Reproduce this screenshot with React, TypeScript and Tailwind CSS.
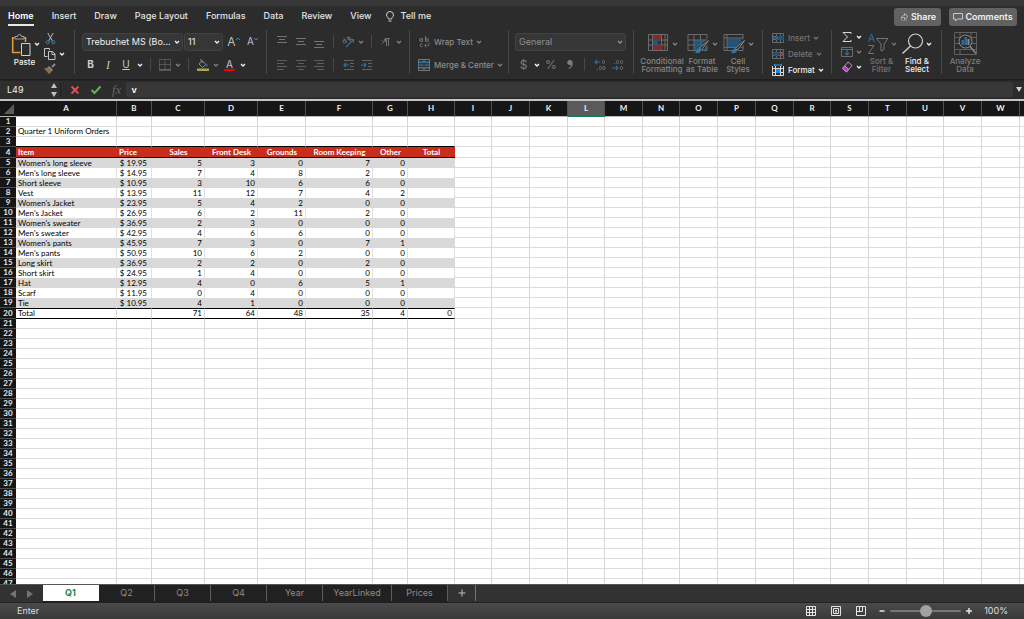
import React, { useState } from "react";

type Row = [string, string, number, number, number, number, number];

const rows: Row[] = [
  ["Women's long sleeve", "19.95", 5, 3, 0, 7, 0],
  ["Men's long sleeve", "14.95", 7, 4, 8, 2, 0],
  ["Short sleeve", "10.95", 3, 10, 6, 6, 0],
  ["Vest", "13.95", 11, 12, 7, 4, 2],
  ["Women's Jacket", "23.95", 5, 4, 2, 0, 0],
  ["Men's Jacket", "26.95", 6, 2, 11, 2, 0],
  ["Women's sweater", "36.95", 2, 3, 0, 0, 0],
  ["Men's sweater", "42.95", 4, 6, 6, 0, 0],
  ["Women's pants", "45.95", 7, 3, 0, 7, 1],
  ["Men's pants", "50.95", 10, 6, 2, 0, 0],
  ["Long skirt", "36.95", 2, 2, 0, 2, 0],
  ["Short skirt", "24.95", 1, 4, 0, 0, 0],
  ["Hat", "12.95", 4, 0, 6, 5, 1],
  ["Scarf", "11.95", 0, 4, 0, 0, 0],
  ["Tie", "10.95", 4, 1, 0, 0, 0],
];

const headings = ["Item", "Price", "Sales", "Front Desk", "Grounds", "Room Keeping", "Other", "Total"];
const totals = ["Total", "", "71", "64", "48", "35", "4", "0"];
const letters = "ABCDEFGHIJKLMNOPQRSTUVW".split("");
const columnWidths = [101, 35, 53, 53, 48, 67, 35, 47, 37, 38, 38, 37, 38, 37, 38, 38, 38, 37, 38, 38, 37, 38, 38];

function Chev({ className = "text-[#808080]" }: { className?: string }) {
  return (
    <svg viewBox="0 0 10 10" className={`h-[10px] w-[10px] shrink-0 ${className}`} fill="none" stroke="currentColor" strokeWidth="1.3" aria-hidden="true">
      <path d="M3 4l2 2 2-2" />
    </svg>
  );
}

function Sep() {
  return <span className="mx-[5px] h-[13px] w-px shrink-0 bg-[#484848]" />;
}

function Tool({ label, className = "w-[17px]", children }: { label: string; className?: string; children: React.ReactNode }) {
  return (
    <button type="button" aria-label={label} className={`flex h-[17px] shrink-0 items-center justify-center ${className}`}>
      {children}
    </button>
  );
}

function Group({ className, children }: { className: string; children: React.ReactNode }) {
  return <div className={`h-[44px] shrink-0 border-r border-[#484848] ${className}`}>{children}</div>;
}

function Picker({ label, value, options, className, tone }: { label: string; value: string; options: string[]; className: string; tone: string }) {
  return (
    <label className={`relative flex h-[18px] items-center rounded-[3px] border border-[#424242] bg-[#363636] ${className}`}>
      <select aria-label={label} defaultValue={value} className={`h-full w-full appearance-none bg-transparent pl-[3px] pr-3 text-[9px] leading-[14px] outline-none ${tone}`}>
        {options.map((o) => (
          <option key={o}>{o}</option>
        ))}
      </select>
      <span className="pointer-events-none absolute right-0">
        <Chev className={tone} />
      </span>
    </label>
  );
}

function Lines({ rows: ls, tone = "#747474" }: { rows: [number, number, number][]; tone?: string }) {
  return (
    <svg viewBox="0 0 12 12" className="h-3 w-3" stroke={tone} strokeWidth="1">
      {ls.map(([a, b, y]) => (
        <path key={y} d={`M${a} ${y}.5H${b}`} />
      ))}
    </svg>
  );
}

function Indent({ right = false }: { right?: boolean }) {
  return (
    <svg viewBox="0 0 12 12" className="h-3 w-3" fill="none" stroke="#626262">
      <path d="M1 1.5h10M7 4.5h4M7 7.5h4M1 10.5h10" />
      <path stroke="#2f6f9c" strokeWidth="1.2" d={right ? "M0 6h5M3 4l2 2-2 2" : "M6 6H1M3 4L1 6l2 2"} />
    </svg>
  );
}

function Decimal({ increase }: { increase: boolean }) {
  return (
    <svg viewBox="0 0 12 12" className="h-3 w-3" fill="none" stroke="#6e6e6e">
      {increase ? (
        <>
          <rect x="8.5" y="1.5" width="2" height="3" rx="1" />
          <path d="M3 10.5h1" />
          <rect x="5.5" y="7.5" width="2" height="3" rx="1" />
          <rect x="9" y="7.5" width="2" height="3" rx="1" />
          <path stroke="#2f6f9c" strokeWidth="1.1" d="M6 3H1M3 1L1 3l2 2" />
        </>
      ) : (
        <>
          <path d="M2 4.5h1" />
          <rect x="4.5" y="1.5" width="2" height="3" rx="1" />
          <rect x="8.5" y="1.5" width="2" height="3" rx="1" />
          <rect x="8.5" y="7.5" width="2" height="3" rx="1" />
          <path stroke="#2f6f9c" strokeWidth="1.1" d="M0 9h6M4 7l2 2-2 2" />
        </>
      )}
    </svg>
  );
}

function BigTool({ icon, lines, tone, chevron = true, className }: { icon: React.ReactNode; lines: string[]; tone: string; chevron?: boolean; className: string }) {
  return (
    <button type="button" className={`flex shrink-0 flex-col items-center ${className}`}>
      <span className={`flex h-[27px] items-center ${chevron ? "pl-[2px]" : ""}`}>
        {icon}
        {chevron && <Chev className={tone} />}
      </span>
      <span className={`block whitespace-nowrap text-center text-[8px] font-medium leading-[8px] ${tone}`}>
        {lines[0]}
        <br />
        {lines[1]}
      </span>
    </button>
  );
}

function CellsIcon({ kind }: { kind: "insert" | "delete" | "format" }) {
  const bright = kind === "format";
  return (
    <svg viewBox="0 0 12 12" className="h-3 w-3" fill="none" stroke={bright ? "#d8d8d8" : "#686868"}>
      <path d={bright ? "M.5 2v9.5h11V2M.5 4.5h11M.5 8.5h11M3.5 2v9.5M8.5 2v9.5" : "M.5 1.5h11v9H.5zM.5 4.5h11M.5 7.5h11M4.5 1.5v9M8.5 1.5v9"} />
      {kind === "insert" && <path d="M4 4h8v4H4z" fill="#245577" stroke="none" />}
      {kind === "insert" && <path d="M6 6H0M2 4L0 6l2 2" stroke="#2f7db5" />}
      {kind === "delete" && <path d="M2 4h5v4H2z" fill="#245577" stroke="none" />}
      {kind === "delete" && <path d="M8 4l4 4M12 4L8 8" stroke="#a03a3a" />}
      {bright && <path d="M4 5h4v4H4z" fill="#1d8ce0" stroke="none" />}
      {bright && <path d="M2.5 0v2M9.5 0v2M2.5 1h7" stroke="#2d9bea" />}
    </svg>
  );
}

function GridIcon({ kind }: { kind: "conditional" | "table" | "cell" }) {
  return (
    <svg viewBox="0 0 23 20" className="h-5 w-[23px]" fill="none" stroke="#6c6c6c">
      {kind === "conditional" && (
        <>
          <path d="M1.500 .5h19v16h-19zM1.500 6h19M1.500 11h19M5.500 .5v16M14.500 .5v16M18 .5v16" />
          <path d="M6 1h8v5H6zM6 11h10v5H6z" fill="#82292e" stroke="none" />
          <path d="M6 6h5v5H6z" fill="#22567a" stroke="none" />
        </>
      )}
      {kind === "table" && (
        <>
          <path d="M7 6h13v10H7z" fill="#1f557c" stroke="none" />
          <path d="M1 .5h19v16H1zM1 6h19M1 11h6M7 .5v16M13.500 .5v5.500" stroke="#6a6a6a" />
          <path d="M7 11h13M13.500 6v10" stroke="#33617f" />
        </>
      )}
      {kind === "cell" && (
        <>
          <path d="M4 4.500h14v9H4z" fill="#1f557c" stroke="none" />
          <path d="M1 .5h19v16H1zM1 4h19M1 13.500h19M4 .5v16" stroke="#6a6a6a" />
        </>
      )}
      {kind !== "conditional" && (
        <>
          <path d="M22 6l-9 10" stroke="#2c2c2c" strokeWidth="4" />
          <path d="M21.500 6.500L13.500 13l-1 2 2 1z" stroke="#8c8c8c" fill="#2c2c2c" />
          <path d="M12 14.500c-2 0-2.500 1.500-3 3-.5 1-1.500 1-2 1 3 1.500 7 1 7-2.500z" fill="#2a78ad" stroke="none" />
        </>
      )}
    </svg>
  );
}

function Ribbon() {
  const dim = "text-[#858585]";
  const lit = "text-[#f0f0f0]";
  const low = "#5e5e5e";
  return (
    <div className="flex h-[50px] overflow-hidden border-b border-[#1e1e1e]">
      <Group className="flex w-[75px] pl-[11px]">
        <button type="button" className="flex w-[32px] flex-col items-start">
          <span className="flex h-[27px] items-center">
            <svg viewBox="0 0 21 23" className="mt-1 h-[23px] w-[21px]" fill="none">
              <path d="M3.500 3.700H1.700V18.500H9.500M14.500 8V3.700h-1.500" stroke="#e5983a" strokeWidth="1.600" />
              <path d="M4 5V2.500h2.500a2 2 0 0 1 4 0H13V5z" stroke="#a2a2a2" />
              <path d="M10.500 9.500h8.500v12h-8.500z" stroke="#d0d0d0" />
            </svg>
            <Chev className={lit} />
          </span>
          <span className="w-[27px] text-center text-[8px] font-medium leading-[10px] text-[#f0f0f0]">Paste</span>
        </button>
        <div className="flex flex-col">
          <Tool label="Cut" className="w-[14px]">
            <svg viewBox="0 0 12 14" className="h-[13px] w-[11px]" fill="none">
              <path d="M3 1l5 8.500M9 1L4 9.500" stroke="#c8c8c8" />
              <circle cx="3" cy="11" r="1.700" stroke="#2f8fce" />
              <circle cx="9" cy="11" r="1.700" stroke="#2f8fce" />
            </svg>
          </Tool>
          <span className="flex h-[13px] items-center">
            <Tool label="Copy" className="w-[14px]">
              <svg viewBox="0 0 12 12" className="h-3 w-3" fill="none" stroke="#c4c4c4">
                <path d="M3.500 8.500h-3v-8h5V2" />
                <path d="M4.500 3.500h4l2.500 2.500v5.500H4.500zM8 4v2.500h3" />
              </svg>
            </Tool>
            <Chev className={lit} />
          </span>
          <Tool label="Format painter" className="w-[14px]">
            <svg viewBox="0 0 12 12" className="h-3 w-3" fill="none">
              <path d="M11 1L8 4" stroke="#8b8b8b" strokeWidth="2" />
              <path d="M5 3l4 4-1.500 1.500-4-4z" fill="#8b8b8b" />
              <path d="M3.500 4.500L0 5.500l5 5.500c1.500-1 2-1.500 2.500-2.500z" fill="#857149" />
            </svg>
          </Tool>
        </div>
      </Group>

      <Group className="w-[192px] pl-[7px]">
        <div className="flex h-[23px] items-center gap-px">
          <Picker label="Font" value="Trebuchet MS (Bo..." options={["Trebuchet MS (Bo...", "Arial"]} className="w-[101px]" tone={lit} />
          <Picker label="Font size" value="11" options={["10", "11", "12"]} className="w-[39px]" tone={lit} />
          <Tool label="Increase font size" className="w-[19px]">
            <span className="text-[12px] text-[#bdbdbd]">A</span>
            <svg viewBox="0 0 4 10" className="h-[10px] w-1" fill="none" stroke="#2f8fce"><path d="M0 3l2-2 2 2" /></svg>
          </Tool>
          <Tool label="Decrease font size">
            <span className="text-[10px] text-[#bdbdbd]">A</span>
            <svg viewBox="0 0 4 10" className="h-[10px] w-1" fill="none" stroke="#2f8fce"><path d="M0 1l2 2 2-2" /></svg>
          </Tool>
        </div>
        <div className="flex h-[23px] items-center">
          <Tool label="Bold"><b className="text-[10px] text-[#d0d0d0]">B</b></Tool>
          <Tool label="Italic" className="w-[18px]"><i className="font-['Liberation_Serif',serif] text-[12px] text-[#c0c0c0]">I</i></Tool>
          <Tool label="Underline" className="w-[18px]"><u className="text-[10px] text-[#c8c8c8]">U</u></Tool>
          <Chev className={lit} />
          <Sep />
          <Tool label="Borders">
            <svg viewBox="0 0 12 12" className="h-3 w-3" fill="none" stroke="#787878">
              <path d="M.5.500h11v10H.5zM6 .5v10M.5 5.500h11" strokeDasharray="1 1" />
              <path d="M0 11h12" />
            </svg>
          </Tool>
          <Chev />
          <Sep />
          <Tool label="Fill color">
            <svg viewBox="0 0 12 12" className="h-3 w-3" fill="none">
              <path d="M5 1.500l4 4L5.500 8.500 2 5z" stroke="#8a8a8a" />
              <path d="M3.500 0l2 4" stroke="#8a8a8a" />
              <path d="M10 4.500c1 1.500 1 3 0 3s-1-1.500 0-3" fill="#2a6a94" />
              <path d="M0 9.500h12V12H0z" fill="#a9a452" />
            </svg>
          </Tool>
          <Chev />
          <Tool label="Font color">
            <span className="flex w-[11px] flex-col items-center border-b-2 border-[#f00000] text-[10px] leading-[10px] text-[#c8c8c8]">A</span>
          </Tool>
          <Chev className={lit} />
        </div>
      </Group>

      <Group className="w-[143px] pl-[5px]">
        <div className="flex h-[23px] items-center">
          <Tool label="Align top" className="w-[19px]"><Lines rows={[[1, 11, 0], [3, 9, 3], [1, 11, 6]]} /></Tool>
          <Tool label="Align middle" className="w-[19px]"><Lines rows={[[1, 11, 2], [3, 9, 5], [1, 11, 8]]} /></Tool>
          <Tool label="Align bottom" className="w-[18px]"><Lines rows={[[1, 11, 5], [3, 9, 8], [1, 11, 11]]} /></Tool>
          <Sep />
          <Tool label="Orientation">
            <svg viewBox="0 0 12 12" className="h-3 w-3" fill="none">
              <circle cx="2.500" cy="5.500" r="1.500" stroke="#707070" />
              <path d="M1.500 2l3.500 4.500M5 1l3.500 4" stroke="#707070" />
              <circle cx="7" cy="2.500" r="1.300" stroke="#707070" />
              <path d="M4 11l7-7M8 3.500h3.500V7" stroke="#2f6f9c" strokeWidth="1.200" />
            </svg>
          </Tool>
          <Chev />
          <Sep />
          <Tool label="Text direction">
            <svg viewBox="0 0 12 12" className="h-3 w-3" fill="none">
              <path d="M1.500 4L4 6 1.500 8" stroke="#2f6f9c" />
              <path d="M6.500 10V2.500M8.500 10V2.500M10 2.500H7" stroke="#707070" />
              <path d="M7 2H6a2 2 0 0 0 0 4h1z" fill="#707070" />
            </svg>
          </Tool>
          <Chev />
        </div>
        <div className="flex h-[23px] items-center">
          <Tool label="Align left" className="w-[19px]"><Lines tone={low} rows={[[1, 11, 1], [1, 8, 4], [1, 11, 7], [1, 8, 10]]} /></Tool>
          <Tool label="Center" className="w-[19px]"><Lines tone={low} rows={[[1, 11, 1], [3, 9, 4], [1, 11, 7], [3, 9, 10]]} /></Tool>
          <Tool label="Align right" className="w-[18px]"><Lines tone={low} rows={[[1, 11, 1], [4, 11, 4], [1, 11, 7], [4, 11, 10]]} /></Tool>
          <Sep />
          <Tool label="Decrease indent" className="w-[19px]"><Indent /></Tool>
          <Tool label="Increase indent" className="w-[18px]"><Indent right /></Tool>
        </div>
      </Group>

      <Group className="w-[99px] pl-2">
        <button type="button" className="flex h-[23px] items-center whitespace-nowrap">
          <svg viewBox="0 0 12 12" className="mr-1 h-3 w-3" fill="none" stroke="#767676">
            <circle cx="3" cy="4" r="1.500" />
            <path d="M4.500 2.500v3M7.500 0v5.500" />
            <circle cx="9" cy="4" r="1.500" />
            <path d="M4.500 8a1.500 1.500 0 1 0 0 2.500" />
            <path d="M11 6.500v3H6.500M8.500 7.500l-2 2 2 2" stroke="#2f6f9c" />
          </svg>
          <span className="mr-px text-[8px] font-medium text-[#8c8c8c]">Wrap Text</span>
          <Chev />
        </button>
        <button type="button" className="flex h-[23px] items-center whitespace-nowrap">
          <svg viewBox="0 0 12 12" className="mr-1 h-3 w-3" fill="none">
            <path d="M.5.500h11v11H.5zM.5 3h11M.5 9h11M6 .5V3M6 9v2.500" stroke="#787878" />
            <path d="M1 3.500h10v5H1z" stroke="#2f6f9c" />
            <path d="M2.500 6h7M4 4.500L2.500 6 4 7.500M8 4.500L9.500 6 8 7.500" stroke="#2f6f9c" />
          </svg>
          <span className="mr-px text-[8px] font-medium text-[#8c8c8c]">Merge &amp; Center</span>
          <Chev />
        </button>
      </Group>

      <Group className="w-[125px] pl-[6px]">
        <div className="flex h-[23px] items-center">
          <Picker label="Number format" value="General" options={["General", "Currency", "Percent"]} className="w-[111px]" tone="text-[#8f8f8f]" />
        </div>
        <div className="flex h-[23px] items-center text-[12px] text-[#7a7a7a]">
          <Tool label="Currency">$</Tool>
          <Chev className="text-white" />
          <Tool label="Percent" className="w-[18px]">%</Tool>
          <Tool label="Comma style" className="w-[19px]">
            <svg viewBox="0 0 6 9" className="h-[9px] w-[6px]" fill="#7e7e7e">
              <path d="M3 0a2.500 2.500 0 0 0-.5 5q1 .2 1.500-.2C4 6.500 3 7.500 1.500 8l.5 1C4.500 8 5.700 6 5.700 3.200 5.700 1.200 4.500 0 3 0z" />
            </svg>
          </Tool>
          <Sep />
          <Tool label="Increase decimal" className="w-[19px]"><Decimal increase /></Tool>
          <Tool label="Decrease decimal" className="w-[18px]"><Decimal increase={false} /></Tool>
        </div>
      </Group>

      <Group className="flex w-[129px] pl-[6px]">
        <BigTool className="w-[44px]" icon={<GridIcon kind="conditional" />} lines={["Conditional", "Formatting"]} tone={dim} />
        <BigTool className="w-[36px]" icon={<GridIcon kind="table" />} lines={["Format", "as Table"]} tone={dim} />
        <BigTool className="w-[36px]" icon={<GridIcon kind="cell" />} lines={["Cell", "Styles"]} tone={dim} />
      </Group>

      <Group className="flex w-[69px] flex-col pl-[9px]">
        {(["Insert", "Delete", "Format"] as const).map((name) => {
          const tone = name === "Format" ? lit : "text-[#747474]";
          return (
            <button key={name} type="button" className={`flex h-[16px] shrink-0 items-center text-[8px] font-medium ${tone}`}>
              <CellsIcon kind={name.toLowerCase() as "insert" | "delete" | "format"} />
              <span className="ml-1 mr-px">{name}</span>
              <Chev className={tone} />
            </button>
          );
        })}
      </Group>

      <Group className="flex w-[110px] pl-[8px]">
        <div className="flex w-[24px] flex-col">
          <button type="button" aria-label="AutoSum" className="flex h-[16px] items-center">
            <svg viewBox="0 0 14 12" className="h-3 w-[14px]" fill="none" stroke="#d6d6d6"><path d="M11 3V1.500H3L7.500 6 3 10.500h8V9" /></svg>
            <Chev className={lit} />
          </button>
          <button type="button" aria-label="Fill" className="flex h-[16px] items-center">
            <svg viewBox="0 0 14 12" className="h-3 w-[14px]" fill="none" stroke="#6c6c6c">
              <path d="M1.500 1.500h11v9h-11zM1.500 3.500h11" />
              <path d="M7 4v5M5 7l2 2 2-2" stroke="#2f6f9c" strokeWidth="1.200" />
            </svg>
            <Chev />
          </button>
          <button type="button" aria-label="Clear" className="flex h-[16px] items-center">
            <svg viewBox="0 0 14 12" className="h-3 w-[14px]" fill="none" stroke="#c98bd0">
              <path d="M8 1l4 3.500-5.500 6.500-4-3.500z" />
              <path d="M4.800 4.800l4 3.500-2.300 2.700-4-3.500z" fill="#b04bbd" />
            </svg>
            <Chev className={lit} />
          </button>
        </div>
        <BigTool
          className="w-[35px]"
          tone="text-[#747474]"
          lines={["Sort &", "Filter"]}
          icon={
            <svg viewBox="0 0 22 22" className="h-[22px] w-[22px]" fill="none" stroke="#747474">
              <path d="M1.500 9L4.500 1l3 8M2.500 6h4" stroke="#2f6f9c" />
              <path d="M1.500 12.500h5.500l-5.500 8h5.500" />
              <path d="M9.500 5.500h11.500L17 11v5.500l-3 1.500v-7z" />
            </svg>
          }
        />
        <BigTool
          className="w-[36px]"
          tone={lit}
          lines={["Find &", "Select"]}
          icon={
            <svg viewBox="0 0 22 22" className="h-[22px] w-[22px]" fill="none" stroke="#cfcfcf">
              <circle cx="13.500" cy="8" r="7" strokeWidth="1.200" />
              <path d="M8.500 13l-8 7.500" strokeWidth="1.400" />
            </svg>
          }
        />
      </Group>

      <BigTool
        className="w-[46px]"
        tone="text-[#7c7c7c]"
        chevron={false}
        lines={["Analyze", "Data"]}
        icon={
          <svg viewBox="0 0 23 23" className="h-[23px] w-[23px]" fill="none" stroke="#6e6e6e">
            <path d="M.5.500h22v22H.5zM.5 5.500h22M.5 11.500h5M17 11.500h5M.5 17.500h22M6 .5v5M17 .5v5M6 17v5" stroke="#606060" />
            <circle cx="11.500" cy="9.500" r="6.500" fill="#2c2c2c" stroke="#8a8a8a" />
            <path d="M7.500 8v5h2.500V8zM10.500 5v8H13V5z" fill="#2d6d99" stroke="none" />
            <path d="M13.500 7h2v6h-2z" fill="#8a8a8a" stroke="none" />
            <path d="M16 14.500l6 7" stroke="#8a8a8a" strokeWidth="1.500" />
          </svg>
        }
      />
    </div>
  );
}

function Header() {
  const tabs = ["Home", "Insert", "Draw", "Page Layout", "Formulas", "Data", "Review", "View"];
  return (
    <header>
      <div className="h-[6px] bg-[#373737]" />
      <div className="flex h-[24px] items-start justify-between pl-2 pr-[7px]">
        <nav className="flex items-start gap-[18px] text-[9px] font-medium leading-[12px] text-[#e4e4e4]">
          {tabs.map((t, i) => (
            <a key={t} href="#" className={`mt-1 whitespace-nowrap pb-[2px] ${i === 0 ? "border-b-2 border-[#e8e8e8] font-semibold text-white" : ""}`}>
              {t}
            </a>
          ))}
          <a href="#" className="-ml-1 mt-1 flex items-center gap-[7px] whitespace-nowrap">
            <svg viewBox="0 0 8 11" className="h-[11px] w-2" fill="none" stroke="#d0d0d0">
              <path d="M2.500 8C2.500 6.500.5 6 .5 4a3.500 3.500 0 0 1 7 0c0 2-2 2.500-2 4zM2.500 10h3" />
            </svg>
            Tell me
          </a>
        </nav>
        <div className="flex gap-2 pt-[2px] text-[9px] font-semibold text-[#f0f0f0]">
          <button type="button" className="flex h-[18px] w-[47px] items-center justify-center gap-[2px] rounded-[3px] bg-[#626262]">
            <svg viewBox="0 0 10 10" className="h-[10px] w-[10px]" fill="none" stroke="#c8c8c8">
              <path d="M2.500 5v3.500h5V7" stroke="#8c8c8c" strokeWidth=".8" />
              <path d="M2.500 6.500c0-2 1-3 3-3V1.500L9 4.500l-3.500 3V5.500C4.500 5.300 3.200 5.500 2.500 6.500z" strokeWidth=".8" />
            </svg>
            Share
          </button>
          <button type="button" className="flex h-[18px] w-[68px] items-center justify-center gap-[2px] rounded-[3px] bg-[#626262]">
            <svg viewBox="0 0 10 10" className="h-[10px] w-[10px]" fill="none" stroke="#c8c8c8">
              <path d="M.5 1.500h9v5.500H4.500l-2 2V7h-2z" />
            </svg>
            Comments
          </button>
        </div>
      </div>
    </header>
  );
}

function FormulaBar() {
  return (
    <div className="flex h-[21px] items-center border-b-2 border-[#c6c2c8] border-t border-t-[#252525] pb-px">
      <label className="flex h-[17px] w-[60px] items-center bg-[#2f2f2f] pl-[7px] pr-[3px]">
        <input aria-label="Name box" defaultValue="L49" className="w-full min-w-0 bg-transparent text-[9px] leading-[12px] text-[#f0f0f0] outline-none" />
        <svg viewBox="0 0 6 14" className="h-[14px] w-[6px] shrink-0" fill="#c0c0c0"><path d="M0 5l3-5 3 5zM0 9l3 5 3-5z" /></svg>
      </label>
      <div className="flex items-center gap-[10px] border-l border-[#202020] pl-[9px] pr-[5px]">
        <button type="button" aria-label="Cancel">
          <svg viewBox="0 0 10 10" className="block h-[10px] w-[10px]" stroke="#e0504f" strokeWidth="2"><path d="M1.500 1.500l7 7M8.500 1.500l-7 7" /></svg>
        </button>
        <button type="button" aria-label="Accept">
          <svg viewBox="0 0 12 10" className="block h-[10px] w-3" fill="none" stroke="#62b555" strokeWidth="2"><path d="M1.500 5l3 3 6-6.500" /></svg>
        </button>
        <button type="button" aria-label="Insert function" className="font-['Liberation_Serif',serif] text-[13px] italic leading-[14px] text-[#666]">fx</button>
      </div>
      <input aria-label="Formula" defaultValue="v" className="h-[15px] min-w-0 flex-1 rounded-[2px] bg-[#383838] pl-[5px] text-[9px] font-semibold text-white outline-none" />
      <button type="button" aria-label="Expand formula bar" className="flex w-[11px] justify-center">
        <svg viewBox="0 0 6 5" className="h-[5px] w-[6px]" fill="#d0d0d0"><path d="M0 0h6L3 5z" /></svg>
      </button>
    </div>
  );
}

function SheetRow({ n }: { n: number }) {
  const item = rows[n - 5];
  const banded = !!item && n % 2 === 1;
  const tall = n === 4 || n === 20;
  const line = "border-b border-[#dcdcdc]";
  const black = "border-b border-b-black";
  const cells = letters.map((letter, c) => {
    const inTable = c < 8;
    let content: React.ReactNode = "";
    let style = `border-r border-r-[#d6d6d6] ${line}`;
    if (inTable && n === 3) style = `border-r border-r-[#d6d6d6] ${black}`;
    if (n === 2 && c === 0) content = <span className="pl-[2px]">Quarter 1 Uniform Orders</span>;
    if (inTable && n === 4) {
      content = headings[c];
      style = `${black} bg-[#c82d1b] font-bold text-white ${c < 2 ? "pl-[2px] text-left" : "text-center"}`;
    }
    if (inTable && item) {
      const pad = c === 0 ? "pl-[2px]" : c === 1 ? "pr-1 text-right" : "pr-[2px] text-right";
      content = c === 1 ? `$ ${item[1]}` : c < 7 ? item[c] : "";
      style = `${pad} border-r ${banded ? "border-r-[#d9d9d9] bg-[#d9d9d9]" : "border-r-[#e0e0e0]"}`;
    }
    if (inTable && n === 20) {
      content = totals[c];
      style = `border-t border-t-black border-r border-r-[#d6d6d6] ${black} ${c === 0 ? "pl-[2px]" : "pr-[2px] text-right"}`;
    }
    return (
      <td key={letter} className={`whitespace-nowrap py-0 ${style}`}>
        {content}
      </td>
    );
  });
  return (
    <tr className={tall ? "h-[11px]" : "h-[10px]"}>
      <th scope="row" className="border-b border-[#4c4c4c] bg-[#161616] p-0 text-center font-bold text-[#e8e8e8]">
        {n}
      </th>
      {cells}
      <td className={`p-0 ${line}`} />
    </tr>
  );
}

function Sheet() {
  return (
    <main className="min-h-0 flex-1 overflow-hidden bg-white font-['Lato',sans-serif] text-[8px] leading-[9px] text-black">
      <table className="w-full table-fixed border-separate border-spacing-0">
        <colgroup>
          <col style={{ width: 16 }} />
          {columnWidths.map((w, i) => (
            <col key={i} style={{ width: w }} />
          ))}
          <col />
        </colgroup>
        <thead>
          <tr className="h-[16px] text-[#f0f0f0]">
            <th className="border-b border-[#b8b8b8] bg-[#161616] p-0" aria-label="Select all">
              <svg viewBox="0 0 16 15" className="block h-[15px] w-4" fill="#5c5c5c"><path d="M14 3v10H4z" /></svg>
            </th>
            {letters.map((l) => (
              <th key={l} scope="col" className={`border-b border-r border-r-[#505050] p-0 font-bold ${l === "L" ? "border-b-2 border-b-[#16804c] bg-[#5a5a5a]" : "border-b-[#b8b8b8] bg-[#161616]"}`}>
                {l}
              </th>
            ))}
            <th className="border-b border-[#b8b8b8] bg-[#161616] p-0" />
          </tr>
        </thead>
        <tbody>
          {Array.from({ length: 47 }, (_, i) => (
            <SheetRow key={i} n={i + 1} />
          ))}
        </tbody>
      </table>
    </main>
  );
}

function SheetTabs() {
  const [active, setActive] = useState("Q1");
  const tabs = ["Q1", "Q2", "Q3", "Q4", "Year", "YearLinked", "Prices"];
  return (
    <div className="flex h-[19px] items-start border-b border-t border-b-[#232323] border-t-[#555] bg-[#323232]">
      <div className="flex h-[17px] w-[43px] items-center justify-center gap-[11px]">
        <button type="button" aria-label="Previous sheet"><svg viewBox="0 0 6 8" className="block h-2 w-[6px]" fill="#747474"><path d="M6 0v8L0 4z" /></svg></button>
        <button type="button" aria-label="Next sheet"><svg viewBox="0 0 6 8" className="block h-2 w-[6px]" fill="#747474"><path d="M0 0v8l6-4z" /></svg></button>
      </div>
      {tabs.map((t) => (
        <div key={t} className="h-[18px] bg-[#212121]">
          <button
            type="button"
            onClick={() => setActive(t)}
            className={`block h-[16px] border-r text-[9px] ${t === "YearLinked" ? "w-[69px]" : "w-[56px]"} ${t === active ? "border-white bg-white font-bold text-[#1a8a55]" : "border-[#5c5c5c] text-[#8c8c8c]"}`}
          >
            {t}
          </button>
        </div>
      ))}
      <button type="button" aria-label="Add sheet" className="flex h-[16px] w-[28px] items-center justify-center border-r border-[#747474]">
        <svg viewBox="0 0 8 8" className="h-2 w-2" stroke="#c0c0c0"><path d="M4 .5v7M.5 4h7" /></svg>
      </button>
    </div>
  );
}

function StatusBar() {
  return (
    <footer className="flex h-[16px] items-center justify-between bg-linear-to-b from-[#4a4a4a] to-[#3a3a3a] pl-[17px] pr-4 text-[9px] leading-[12px] text-[#dedede]">
      <span>Enter</span>
      <div className="flex items-center">
        <div className="flex items-center gap-[15px] pr-[13px]">
          <button type="button" aria-label="Normal view">
            <svg viewBox="0 0 10 10" className="block h-[10px] w-[10px]" fill="none" stroke="#e4e4e4"><path d="M.5.500h9v9h-9zM.5 3.500h9M.5 6.500h9M3.500.5v9M6.500.5v9" /></svg>
          </button>
          <button type="button" aria-label="Page layout view">
            <svg viewBox="0 0 10 10" className="block h-[10px] w-[10px]" fill="none" stroke="#e4e4e4"><path d="M.5.500h9v9h-9zM2.500 2.500h5v5h-5zM4 4.500h2M4 6h2" /></svg>
          </button>
          <button type="button" aria-label="Page break view">
            <svg viewBox="0 0 10 10" className="block h-[10px] w-[10px]" fill="none" stroke="#e4e4e4"><path d="M.5.500h9v9h-9zM3.500.5v5M6.500.5v5M.5 5.500h6" /></svg>
          </button>
        </div>
        <button type="button" aria-label="Zoom out"><svg viewBox="0 0 6 6" className="block h-[6px] w-[6px]" stroke="#e4e4e4" strokeWidth="1.500"><path d="M.5 3h5" /></svg></button>
        <input
          type="range"
          aria-label="Zoom"
          defaultValue={50}
          className="mx-[5px] h-3 w-[71px] appearance-none bg-transparent [&::-webkit-slider-runnable-track]:h-[2px] [&::-webkit-slider-runnable-track]:rounded-full [&::-webkit-slider-runnable-track]:bg-[#777] [&::-webkit-slider-thumb]:-mt-[5px] [&::-webkit-slider-thumb]:h-3 [&::-webkit-slider-thumb]:w-3 [&::-webkit-slider-thumb]:appearance-none [&::-webkit-slider-thumb]:rounded-full [&::-webkit-slider-thumb]:bg-[#a2a2a2]"
        />
        <button type="button" aria-label="Zoom in"><svg viewBox="0 0 6 6" className="block h-[6px] w-[6px]" stroke="#e4e4e4" strokeWidth="1.500"><path d="M0 3h6M3 0v6" /></svg></button>
        <span className="pl-3">100%</span>
      </div>
    </footer>
  );
}

export default function App() {
  return (
    <div className="flex h-screen flex-col overflow-hidden bg-[#2c2c2c] font-['Inter',sans-serif]">
      <Header />
      <Ribbon />
      <FormulaBar />
      <Sheet />
      <SheetTabs />
      <StatusBar />
    </div>
  );
}
